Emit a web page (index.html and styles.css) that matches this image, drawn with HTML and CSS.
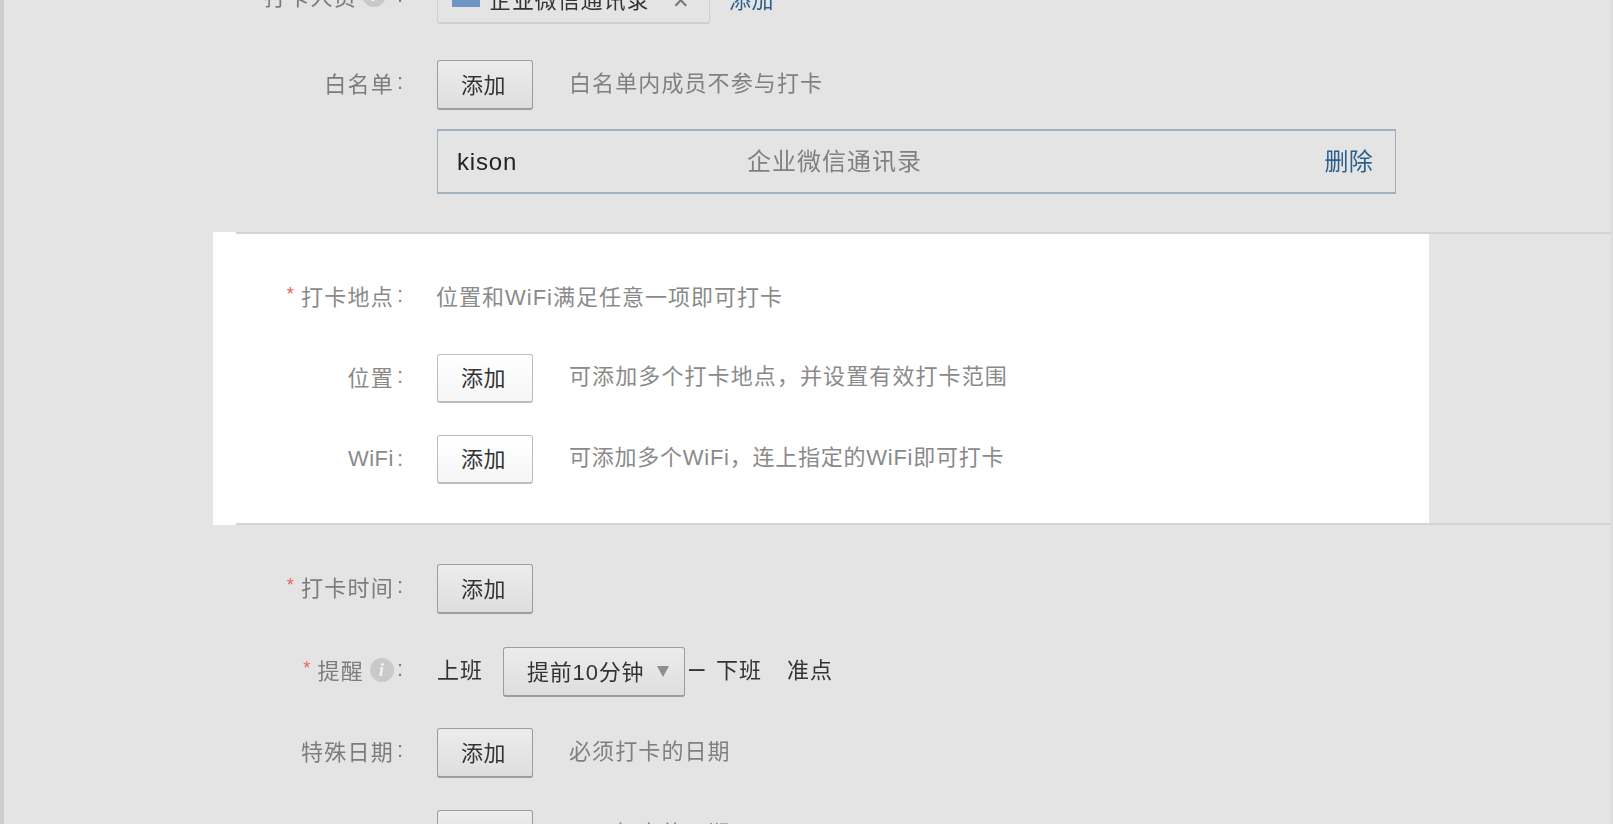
FILE: index.html
```html
<!DOCTYPE html>
<html lang="zh">
<head>
<meta charset="utf-8">
<title>打卡规则</title>
<link rel="stylesheet" href="styles.css">
</head>
<body>
<main class="page">
  <div class="row row-top">
    <div class="label">打卡人员<span class="info info-wide"><i>i</i></span><span class="colon">:</span></div>
    <div class="chip"><span class="chip-icon"></span><span class="chip-text">企业微信通讯录</span><span class="chip-x">✕</span></div>
    <a class="link link-add">添加</a>
  </div>
  <div class="row row-white">
    <div class="label">白名单<span class="colon">:</span></div>
    <button class="btn">添加</button>
    <span class="desc">白名单内成员不参与打卡</span>
  </div>
  <div class="member">
    <span class="member-name">kison</span>
    <span class="member-src">企业微信通讯录</span>
    <a class="link member-del">删除</a>
  </div>
  <section class="band">
    <div class="panel">
      <div class="row row-head">
        <div class="label"><span class="req">*</span>打卡地点<span class="colon">:</span></div>
        <span class="desc desc-flush">位置和WiFi满足任意一项即可打卡</span>
      </div>
      <div class="row row-pos">
        <div class="label">位置<span class="colon">:</span></div>
        <button class="btn btn-lit">添加</button>
        <span class="desc">可添加多个打卡地点，并设置有效打卡范围</span>
      </div>
      <div class="row row-wifi">
        <div class="label">WiFi<span class="colon">:</span></div>
        <button class="btn btn-lit">添加</button>
        <span class="desc">可添加多个WiFi，连上指定的WiFi即可打卡</span>
      </div>
    </div>
  </section>
  <div class="row row-time">
    <div class="label"><span class="req">*</span>打卡时间<span class="colon">:</span></div>
    <button class="btn">添加</button>
  </div>
  <div class="row row-remind">
    <div class="label"><span class="req">*</span>提醒<span class="info"><i>i</i></span><span class="colon">:</span></div>
    <span class="plain">上班</span>
    <div class="select"><span class="select-text">提前10分钟</span><span class="caret"></span></div>
    <span class="plain dash">–</span>
    <span class="plain off">下班</span>
    <span class="plain ontime">准点</span>
  </div>
  <div class="row row-next">
    <div class="label">特殊日期<span class="colon">:</span></div>
    <button class="btn">添加</button>
    <span class="desc">必须打卡的日期</span>
  </div>
  <div class="row row-last">
    <div class="label"></div>
    <button class="btn">添加</button>
    <span class="desc">不用打卡的日期</span>
  </div>
</main>
</body>
</html>
```
FILE: styles.css
```css
* { box-sizing: border-box; }
html, body { margin: 0; height: 100%; overflow: hidden; }
body {
  background: #e4e4e4;
  font-family: "Liberation Sans", "Noto Sans CJK SC", sans-serif;
  font-size: 22px;
  color: #333;
}
.page {
  height: 824px;
  overflow: hidden;
  border-left: 4px solid #cbcdcb;
  border-right: 2px solid #dcdcdc;
  display: flex;
  flex-direction: column;
  filter: blur(0.45px);
}
.row { display: flex; align-items: center; height: 50px; flex: none; }
.label {
  width: 399px;
  margin-right: 34px;
  margin-bottom: 7px;
  display: flex;
  justify-content: flex-end;
  align-items: center;
  color: #7c7c7c;
  letter-spacing: 1.2px;
  white-space: nowrap;
  flex: none;
}
.colon { margin-left: 3px; letter-spacing: 0; }
.req { color: #e8605c; font-size: 18px; margin-right: 6px; }
.info {
  width: 24px;
  height: 24px;
  margin: 3px 0 0 6px;
  border-radius: 50%;
  background: #c9c9c9;
  color: #f2f2f2;
  display: inline-flex;
  align-items: center;
  justify-content: center;
  font: italic 700 19px "Liberation Serif", serif;
}
.info-wide { margin: 0 8px 0 5px; }
.info i { font-style: italic; }
.row-top { margin-top: -27px; }
.chip {
  width: 273px;
  height: 51px;
  border: 1px solid #d0d0d0;
  border-bottom-width: 2px;
  border-radius: 3px;
  display: flex;
  align-items: center;
  padding-left: 14px;
  color: #333;
  letter-spacing: 0.9px;
  flex: none;
}
.chip-icon { width: 28px; height: 26px; margin-top: -7px; background: #6f95c4; margin-right: 9px; }
.chip-text { width: 183px; white-space: nowrap; }
.chip-x { color: #777; font-size: 21px; margin-top: 6px; }
.link { color: #2c5f8d; letter-spacing: 0.6px; }
.link-add { margin-left: 19px; }
.row-white { margin-top: 37px; }
.btn {
  width: 96px;
  height: 50px;
  padding: 0 3px 4px 0;
  border: 1px solid #9d9d9d;
  border-bottom-width: 2px;
  border-radius: 3px;
  background: linear-gradient(#ececec, #dedede);
  font: inherit;
  letter-spacing: 0.4px;
  color: #333;
  flex: none;
}
.btn-lit {
  border-color: #bdbdbd;
  background: linear-gradient(#ffffff, #f6f6f6);
}
.desc {
  margin-left: 36px;
  margin-bottom: 9px;
  color: #808080;
  letter-spacing: 1.1px;
  white-space: nowrap;
}
.desc-flush { margin-left: -1px; margin-bottom: 5px; letter-spacing: 1px; }
.panel .label { color: #8a8a8a; margin-bottom: 5px; }
.panel .desc { color: #8a8a8a; }
.member {
  margin: 19px 0 0 433px;
  width: 959px;
  height: 65px;
  border: 1px solid #a3b1be;
  border-width: 2px 1px;
  display: flex;
  align-items: center;
  padding: 0 22px 0 19px;
  flex: none;
  font-size: 24px;
}
.member-name { width: 290px; color: #222; letter-spacing: 0.8px; }
.member-src { flex: 1; color: #808080; letter-spacing: 1px; margin-bottom: 5px; }
.member-del { letter-spacing: 0.2px; margin-bottom: 5px; }
.band {
  margin: 38px 0 0 232px;
  height: 293px;
  border-top: 2px solid #d4d4d4;
  border-bottom: 2px solid #d4d4d4;
  flex: none;
}
.panel {
  position: relative;
  margin-left: -23px;
  width: 1216px;
  height: 289px;
  background: #fff;
  padding-top: 38px;
}
.panel::before, .panel::after {
  content: "";
  position: absolute;
  left: 0;
  width: 23px;
  height: 2px;
  background: #fff;
}
.panel::before { top: -2px; }
.panel::after { bottom: -2px; }
.panel .label { width: 190px; }
.row-pos { margin-top: 32px; height: 49px; }
.row-wifi { margin-top: 32px; height: 49px; }
.panel .row-wifi .label { margin-bottom: 1px; letter-spacing: 0.5px; }
.row-wifi .desc { letter-spacing: 0.75px; }
.panel .btn { height: 49px; }
.row-time { margin-top: 39px; }
.row-remind { margin-top: 33px; }
.row-next { margin-top: 31px; }
.row-last { margin-top: 32px; }
.plain { color: #333; letter-spacing: 1px; white-space: nowrap; margin-bottom: 8px; }
.select {
  width: 182px;
  height: 50px;
  margin-left: 20px;
  border: 1px solid #9d9d9d;
  border-bottom-width: 2px;
  border-radius: 3px;
  background: linear-gradient(#ececec, #dedede);
  display: flex;
  align-items: center;
  padding-left: 23px;
  color: #333;
  white-space: nowrap;
  flex: none;
}
.select-text { letter-spacing: 0.8px; margin-bottom: 4px; }
.caret {
  margin-left: 13px;
  width: 0;
  height: 0;
  border-left: 6px solid transparent;
  border-right: 6px solid transparent;
  border-top: 11px solid #8e8e8e;
}
.dash { margin-left: 4px; width: 27px; font-size: 28px; letter-spacing: 0; }
.off { width: 71px; }
```
